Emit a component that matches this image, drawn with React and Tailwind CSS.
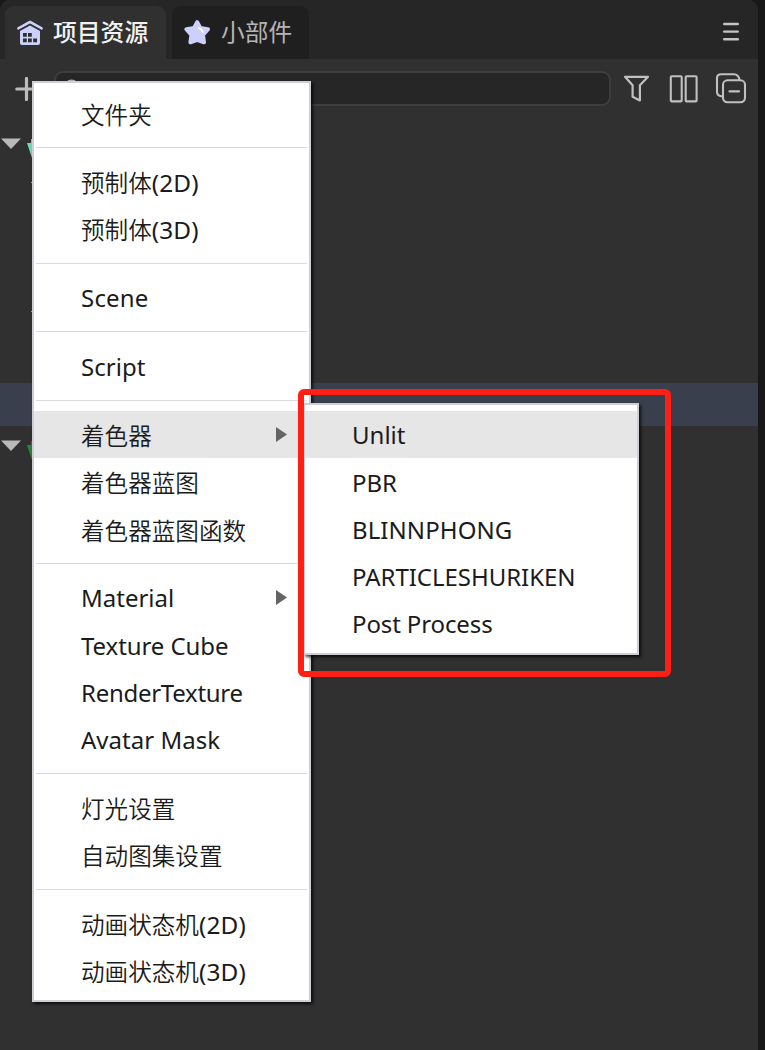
import React from "react";

const latin = "font-['Noto_Sans','Noto_Sans_CJK_SC',sans-serif]";

const createMenu = [
  [{ t: "文件夹" }],
  [{ t: "预制体", s: "(2D)" }, { t: "预制体", s: "(3D)" }],
  [{ t: "Scene", c: "tracking-[0.2px]" }],
  [{ t: "Script", c: "tracking-[0.05px]" }],
  [{ t: "着色器", sub: true, active: true }, { t: "着色器蓝图" }, { t: "着色器蓝图函数" }],
  [
    { t: "Material", sub: true, c: "tracking-[0px]" },
    { t: "Texture Cube", c: "tracking-[-0.08px]" },
    { t: "RenderTexture", c: "tracking-[-0.28px]" },
    { t: "Avatar Mask", c: "tracking-[0.02px]" },
  ],
  [{ t: "灯光设置" }, { t: "自动图集设置" }],
  [{ t: "动画状态机", s: "(2D)" }, { t: "动画状态机", s: "(3D)" }],
];

const shaderMenu = [
  { t: "Unlit", active: true, c: "tracking-[0px]" },
  { t: "PBR", c: "tracking-[0px]" },
  { t: "BLINNPHONG", c: "tracking-[0.08px]" },
  { t: "PARTICLESHURIKEN", c: "tracking-[-0.04px]" },
  { t: "Post Process", c: "tracking-[-0.12px]" },
];

function textStyle(item) {
  if (item.c) return `pt-[1.8px] text-[24px] ${item.c}`;
  return item.s ? "pt-[3px] text-[23.6px] font-[350]" : "pt-[5px] text-[23.6px] font-[350]";
}

function MenuItem({ item }) {
  return (
    <div className={`flex h-[47.2px] items-center justify-between pl-[47px] pr-[22px] ${item.active ? "bg-[#e6e6e6]" : ""}`}>
      <span className={`whitespace-nowrap leading-none text-[#1b1b1b] ${textStyle(item)}`}>
        {item.t}
        {item.s && <span className="text-[24.4px] font-normal tracking-[0.15px]">{item.s}</span>}
      </span>
      {item.sub && (
        <svg className="h-[15px] w-[11px]" viewBox="0 0 11 15">
          <path d="M0 0L11 7.5L0 15Z" fill="#646464" />
        </svg>
      )}
    </div>
  );
}

function HomeIcon() {
  return (
    <svg className="h-[26px] w-[28px]" viewBox="0 0 28 26">
      <path d="M2.4 8.3L14 2L25.6 8.3" fill="none" stroke="#ccd0fb" strokeWidth="2.6" strokeLinecap="round" strokeLinejoin="round" />
      <path d="M4 11L14 5.4L24 11V23Q24 25 22 25H6Q4 25 4 23Z" fill="#ccd0fb" />
      <path d="M3 10L14 4L25 10" fill="none" stroke="#2f2f33" strokeWidth="0.7" />
      <g fill="#2f2f33">
        <path d="M7 13h3.8v3.8H7zM12 13h3.8v3.8H12zM7 18.5h3.8v3.8H7zM12 18.5h3.8v3.8H12zM17.2 18.5H21v3.8h-3.8z" />
      </g>
    </svg>
  );
}

function StarIcon() {
  return (
    <svg className="h-[26px] w-[28px]" viewBox="0 0 28 26">
      <path d="M13.2 2.2L16.3 8L24 9.2L19 14.9L20 22.3L13.2 19.8L6.4 22.3L7.4 14.9L2.4 9.2L10.1 8Z" fill="#ccd0fb" stroke="#ccd0fb" strokeWidth="4" strokeLinejoin="round" />
      <path d="M15 8Q17.8 9 18.8 12" fill="none" stroke="#fff" strokeWidth="2" strokeLinecap="round" />
    </svg>
  );
}

function TreeRow({ color }) {
  return (
    <div className="flex h-[43px] items-center">
      <svg className="h-[20px] w-[44px] overflow-visible" viewBox="0 0 44 20">
        <path d="M1 4.5H21L11 15Z" fill="#b9b9b9" />
        <path d="M27 9H31V5H42V24H32Z" fill={color} />
      </svg>
    </div>
  );
}

export default function App() {
  return (
    <div className={`relative h-[1050px] w-[765px] overflow-hidden bg-[#181818] ${latin}`}>
      <div className="flex h-full w-[758px] flex-col overflow-hidden rounded-t-[10px] bg-[#303030]">
        <div className="flex h-[59px] shrink-0 items-end bg-[#262626] pl-[5px]">
          <div className="flex h-[53px] w-[161px] items-center rounded-t-[9px] bg-[#303030] pl-[11px]">
            <HomeIcon />
            <span className="ml-[9px] whitespace-nowrap text-[23.8px] font-medium leading-none text-[#f2f2f2]">项目资源</span>
          </div>
          <div className="ml-[6px] flex h-[53px] w-[137px] items-center rounded-t-[9px] bg-[#1f1f1f] pl-[12px]">
            <StarIcon />
            <span className="ml-[9px] whitespace-nowrap text-[23.7px] leading-none text-[#b5b5b5]">小部件</span>
          </div>
          <svg className="mb-[17px] ml-auto mr-[19px] h-[20px] w-[16px]" viewBox="0 0 16 20">
            <path d="M1.2 2H14.8M1.2 9.6H14.8M1.2 17.2H14.8" stroke="#c4c4c4" strokeWidth="2.4" strokeLinecap="round" />
          </svg>
        </div>

        <div className="flex h-[59px] shrink-0 items-center pl-[15px]">
          <svg className="h-[24px] w-[24px]" viewBox="0 0 24 24">
            <path d="M1.8 12H22.5M11.5 1.5V22.5" stroke="#bcbcbc" strokeWidth="3.2" strokeLinecap="round" />
          </svg>
          <div className="ml-[15px] flex h-[35px] w-[557px] items-center rounded-[9px] border-2 border-[#3e3e3e] bg-[#262626] pl-[7px]">
            <svg className="h-[20px] w-[20px]" viewBox="0 0 20 20">
              <circle cx="8.5" cy="8" r="6.2" fill="none" stroke="#b5b5b5" strokeWidth="2.6" />
              <path d="M13 13L18 18" stroke="#b5b5b5" strokeWidth="2" />
            </svg>
          </div>
          <svg className="ml-[12px] h-[28px] w-[27px]" viewBox="0 0 27 28">
            <path d="M2 1.8H25L16.9 10.2V25.4L9.6 21.8V10.2Z" fill="none" stroke="#c0c0c0" strokeWidth="2.2" strokeLinejoin="round" />
          </svg>
          <svg className="ml-[19px] h-[28px] w-[30px]" viewBox="0 0 30 28">
            <rect x="1.8" y="1.2" width="10.9" height="25.2" rx="1" fill="none" stroke="#c0c0c0" strokeWidth="2.1" />
            <rect x="16.7" y="1.2" width="10.9" height="25.2" rx="1" fill="none" stroke="#c0c0c0" strokeWidth="2.1" />
          </svg>
          <svg className="ml-[16px] h-[32px] w-[32px]" viewBox="0 0 32 32">
            <path d="M8 23.2H6Q2 22.5 2 18.7V5.2Q2 1.2 6 1.2H19Q23.6 1.2 24.5 7" fill="none" stroke="#c0c0c0" strokeWidth="2.1" />
            <rect x="8" y="7.3" width="22" height="22" rx="4.5" fill="none" stroke="#c0c0c0" strokeWidth="2.1" />
            <path d="M14.5 18.3H24" stroke="#c0c0c0" strokeWidth="2.3" strokeLinecap="round" />
          </svg>
        </div>

        <div className="mt-[4px] h-[43px] shrink-0"><TreeRow color="#72d8bb" /></div>
        <div className="mt-[16px] flex h-[3px] items-center pl-[31px]"><div className="h-px w-[3px] bg-[#aaa]" /></div>
        <div className="mt-[126px] flex h-[3px] items-center pl-[31px]"><div className="h-px w-[3px] bg-[#aaa]" /></div>
        <div className="mt-[70px] h-[43px] bg-[#3a3f4e]" />
        <div className="-mt-[2px] h-[43px]"><TreeRow color="#25873a" /></div>
      </div>

      <div className="absolute left-[32px] top-[81px] h-[921px] w-[279px] border-2 border-[#cdcfd4] bg-white pt-[6.4px] shadow-[2px_2px_3px_rgba(0,0,0,0.75)]">
        {createMenu.map((group, i) => (
          <React.Fragment key={i}>
            {i > 0 && (
              <div className="flex h-[21.4px] items-center px-[2px]">
                <div className="h-px w-full bg-[#dadbde]" />
              </div>
            )}
            {group.map((item) => <MenuItem key={item.t + (item.s || "")} item={item} />)}
          </React.Fragment>
        ))}
      </div>

      <div className="absolute left-[303px] top-[403px] h-[252px] w-[336px] border-2 border-[#cdcfd4] bg-white pt-[6px] shadow-[2px_2px_3px_rgba(0,0,0,0.75)]">
        {shaderMenu.map((item) => <MenuItem key={item.t} item={item} />)}
      </div>

      <div className="absolute left-[298px] top-[389px] h-[288px] w-[373px] rounded-[6px] border-[6px] border-[#ff1f14]" />
    </div>
  );
}
